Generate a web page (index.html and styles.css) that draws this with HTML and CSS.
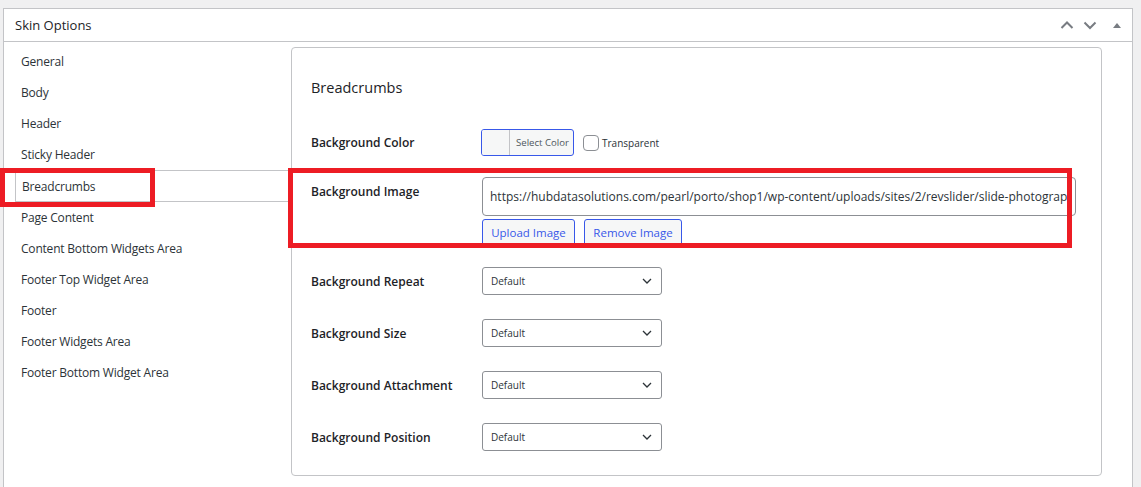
FILE: index.html
```html
<!DOCTYPE html>
<html>
<head>
<meta charset="utf-8">
<link rel="stylesheet" href="styles.css">
</head>
<body>
<div class="postbox">
  <div class="postbox-header">
    <h2 class="postbox-title">Skin Options</h2>
    <div class="handle-actions">
      <svg class="ico ico-up" width="14" height="10" viewBox="0 0 14 10"><polyline points="1.5,8 7,2.5 12.5,8" fill="none" stroke="#787c82" stroke-width="2"/></svg>
      <svg class="ico ico-down" width="14" height="10" viewBox="0 0 14 10"><polyline points="1.5,2.5 7,8 12.5,2.5" fill="none" stroke="#787c82" stroke-width="2"/></svg>
      <svg class="ico ico-tri" width="10" height="10" viewBox="0 0 10 10"><polygon points="1,8 5,3 9,8" fill="#787c82"/></svg>
    </div>
  </div>
  <div class="inside">
    <ul class="tabs">
      <li class="tab">General</li>
      <li class="tab">Body</li>
      <li class="tab">Header</li>
      <li class="tab">Sticky Header</li>
      <li class="tab tab-active">Breadcrumbs</li>
      <li class="tab">Page Content</li>
      <li class="tab">Content Bottom Widgets Area</li>
      <li class="tab">Footer Top Widget Area</li>
      <li class="tab">Footer</li>
      <li class="tab">Footer Widgets Area</li>
      <li class="tab">Footer Bottom Widget Area</li>
    </ul>
    <div class="panel">
      <h3 class="panel-title">Breadcrumbs</h3>
      <div class="row row-color">
        <div class="label">Background Color</div>
        <div class="control">
          <div class="color-btn"><span class="swatch"></span><span class="color-text">Select Color</span></div>
          <span class="checkbox"></span><span class="check-label">Transparent</span>
        </div>
      </div>
      <div class="row row-image">
        <div class="label label-top">Background Image</div>
        <div class="control control-col">
          <div class="url-input">https://hubdatasolutions.com/pearl/porto/shop1/wp-content/uploads/sites/2/revslider/slide-photograp</div>
          <div class="btns">
            <span class="btn btn-upload">Upload Image</span>
            <span class="btn btn-remove">Remove Image</span>
          </div>
        </div>
      </div>
      <div class="row row-select row-first">
        <div class="label">Background Repeat</div>
        <div class="control"><div class="select"><span>Default</span><svg width="10" height="6" viewBox="0 0 10 6"><polyline points="1,1 5,5 9,1" fill="none" stroke="#2c3338" stroke-width="1.3"/></svg></div></div>
      </div>
      <div class="row row-select">
        <div class="label">Background Size</div>
        <div class="control"><div class="select"><span>Default</span><svg width="10" height="6" viewBox="0 0 10 6"><polyline points="1,1 5,5 9,1" fill="none" stroke="#2c3338" stroke-width="1.3"/></svg></div></div>
      </div>
      <div class="row row-select">
        <div class="label">Background Attachment</div>
        <div class="control"><div class="select"><span>Default</span><svg width="10" height="6" viewBox="0 0 10 6"><polyline points="1,1 5,5 9,1" fill="none" stroke="#2c3338" stroke-width="1.3"/></svg></div></div>
      </div>
      <div class="row row-select">
        <div class="label">Background Position</div>
        <div class="control"><div class="select"><span>Default</span><svg width="10" height="6" viewBox="0 0 10 6"><polyline points="1,1 5,5 9,1" fill="none" stroke="#2c3338" stroke-width="1.3"/></svg></div></div>
      </div>
    </div>
  </div>
</div>
<div class="mark mark-nav"></div>
<div class="mark mark-field"></div>
</body>
</html>
```
FILE: styles.css
```css
* { box-sizing: border-box; }
html, body { margin: 0; padding: 0; }
body {
  background: #f0f0f1;
  padding: 8px 8px 0 3px;
  font-family: "Open Sans", "Noto Sans", "Liberation Sans", sans-serif;
  color: #2c3338;
  overflow: hidden;
  height: 487px;
  position: relative;
}
.postbox {
  width: 1130px;
  background: #fff;
  border: 1px solid #c3c4c7;
  border-bottom: none;
  min-height: 520px;
}
.postbox-header {
  height: 33px;
  border-bottom: 1px solid #c3c4c7;
  display: flex;
  align-items: center;
  justify-content: space-between;
  padding: 0 10px 0 11px;
}
.postbox-title {
  margin: 0;
  font-size: 13px;
  font-weight: 400;
  color: #1d2327;
}
.handle-actions {
  display: flex;
  align-items: center;
}
.ico-down { margin-left: 9px; }
.ico-tri { margin-left: 15px; }
.inside {
  display: flex;
  align-items: flex-start;
}
.tabs {
  list-style: none;
  margin: 0;
  padding: 4px 0 0 0;
  width: 287px;
  flex: none;
}
.tab {
  height: 31px;
  line-height: 32px;
  padding-left: 17px;
  font-size: 12px;
  letter-spacing: -0.2px;
  color: #2c3338;
  white-space: nowrap;
}
.tab-active {
  height: 32px;
  line-height: 31px;
  margin-left: 11px;
  padding-left: 6px;
  border-top: 1px solid #c3c4c7;
  border-bottom: 1px solid #c3c4c7;
  border-left: 1px solid #c3c4c7;
}
.panel {
  margin-top: 5px;
  width: 811px;
  height: 429px;
  border: 1px solid #c3c4c7;
  border-radius: 4px;
  padding: 29px 19px 24px 19px;
}
.panel-title {
  margin: 0;
  font-size: 14.5px;
  line-height: 22px;
  font-weight: 400;
  color: #1d2327;
}
.row {
  display: flex;
  align-items: center;
}
.label {
  width: 171px;
  flex: none;
  font-size: 12px;
  font-weight: 600;
  color: #1d2327;
  line-height: 18px;
  padding-top: 2px;
}
.control {
  display: flex;
  align-items: center;
}
.row-color { margin-top: 30px; height: 27px; }
.row-color .label { padding-top: 0; }
.color-btn {
  margin-left: -1px;
  width: 93px;
  height: 27px;
  border: 1px solid #3858e9;
  border-radius: 3px;
  background: #f6f7f7;
  display: flex;
  align-items: stretch;
  overflow: hidden;
}
.swatch {
  width: 28px;
  flex: none;
  border-right: 1px solid #c3c4c7;
  background: #f6f7f7;
}
.color-text {
  font-size: 9.6px;
  line-height: 26px;
  color: #50575e;
  padding-left: 6px;
  white-space: nowrap;
}
.checkbox {
  margin-left: 9px;
  width: 16px;
  height: 16px;
  border: 1px solid #8c8f94;
  border-radius: 4px;
  background: #fff;
  flex: none;
}
.check-label {
  margin-left: 3px;
  font-size: 10px;
  color: #2c3338;
}
.row-image {
  margin-top: 21px;
  align-items: flex-start;
}
.label-top { padding-top: 6px; }
.control-col {
  flex-direction: column;
  align-items: flex-start;
}
.url-input {
  width: 594px;
  height: 39px;
  border: 1px solid #8c8f94;
  border-radius: 4px;
  padding: 0 7px;
  font-size: 12px;
  line-height: 37px;
  color: #2c3338;
  white-space: nowrap;
  overflow: hidden;
}
.btns {
  margin-top: 3px;
  display: flex;
  gap: 9px;
}
.btn {
  height: 27px;
  border: 1px solid #3858e9;
  border-radius: 3px;
  background: #f6f7f7;
  color: #3858e9;
  font-size: 11.5px;
  line-height: 26px;
  text-align: center;
  white-space: nowrap;
}
.btn-upload { width: 93px; }
.btn-remove { width: 98px; }
.row-select { margin-top: 24px; height: 28px; }
.row-first { margin-top: 21px; }
.select {
  width: 180px;
  height: 28px;
  border: 1px solid #8c8f94;
  border-radius: 3px;
  background: #fff;
  display: flex;
  align-items: center;
  justify-content: space-between;
  padding: 0 9px 0 8px;
  font-size: 10px;
  color: #2c3338;
}
.mark {
  position: absolute;
  border: 5px solid #ed1c24;
}
.mark-nav { left: 0; top: 168px; width: 155px; height: 39px; }
.mark-field { left: 288px; top: 168px; width: 784px; height: 80px; }
```
